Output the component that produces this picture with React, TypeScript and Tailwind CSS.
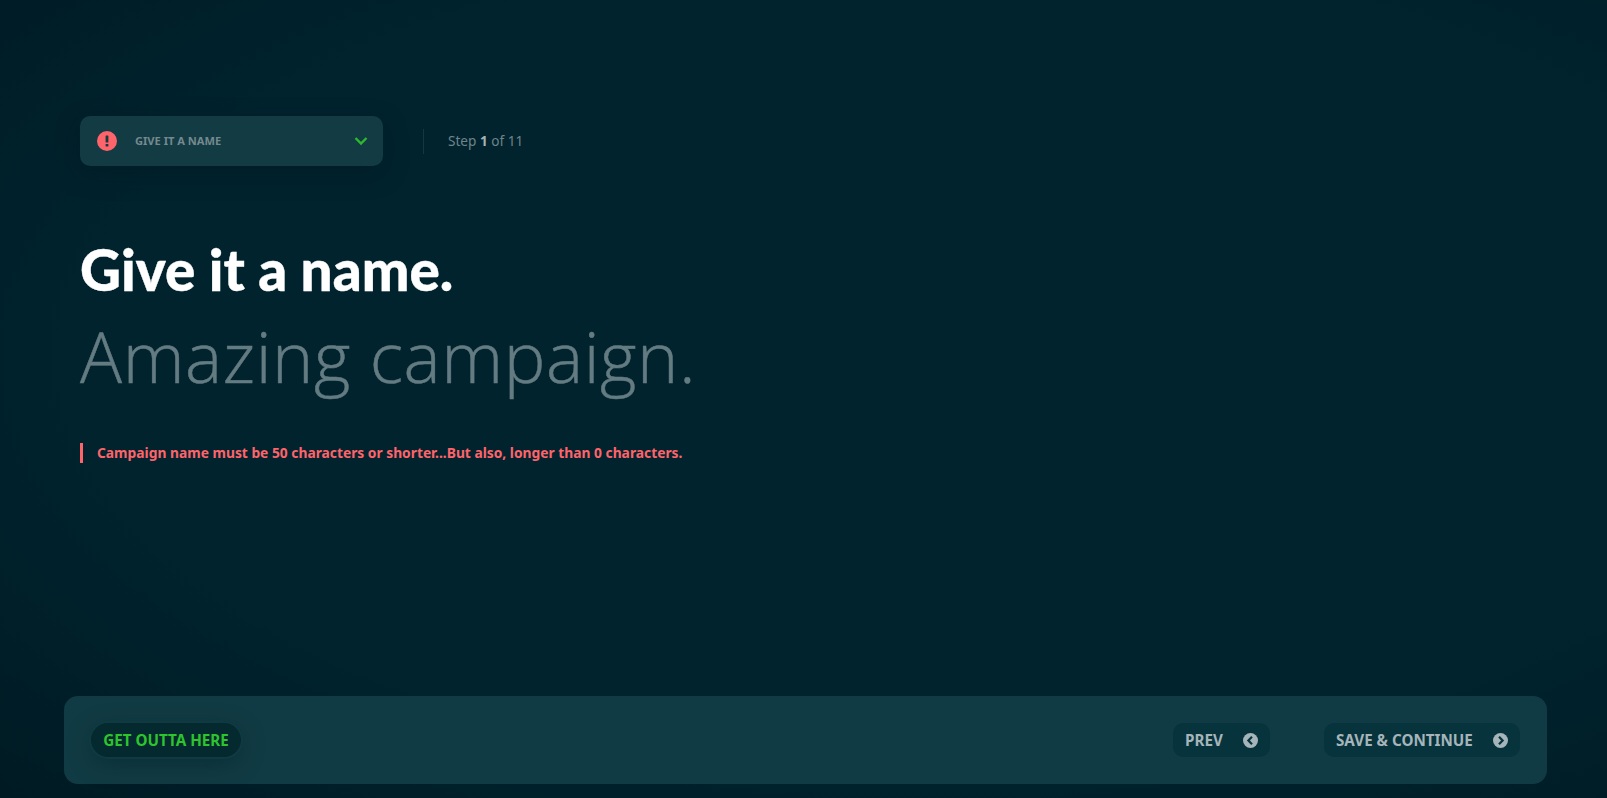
const App = () => {
  return (
    <div className="h-[798px] overflow-hidden flex flex-col justify-between bg-[#00222d] bg-[radial-gradient(ellipse_at_58%_45%,#00232e_65%,#001a23_100%)] font-['Noto_Sans',sans-serif]">
      <main className="pt-[116px] pl-20">
        <div className="flex items-center">
          <button
            type="button"
            className="w-[303px] h-[50px] pl-[17px] pr-[15px] flex items-center rounded-[10px] bg-[#123b43] shadow-[0_8px_24px_rgba(0,20,28,0.35)]"
          >
            <span className="w-5 h-5 rounded-full bg-[#ff646a] flex items-center justify-center">
              <svg width="4" height="12" viewBox="0 0 4 12" fill="#143a42">
                <rect x="0.6" y="0.5" width="2.8" height="7" rx="0.6" />
                <rect x="0.6" y="9" width="2.8" height="2.6" rx="0.6" />
              </svg>
            </span>
            <span className="ml-[18px] text-[11.1px] font-bold text-[#75898f] leading-none">GIVE IT A NAME</span>
            <svg className="ml-auto" width="14" height="10" viewBox="0 0 14 10" fill="none" stroke="#2db92d" strokeWidth="2.4">
              <path d="M1.5 2 L7 7.5 L12.5 2" />
            </svg>
          </button>
          <div className="ml-10 w-px h-[25px] bg-[#17373f]" />
          <p className="ml-6 text-[13.6px] text-[#6f848a] leading-none">
            Step <span className="font-bold text-[#a5b3b7]">1</span> of 11
          </p>
        </div>

        <h1 className="mt-[65px] text-[56.6px] leading-[76px] font-black text-white font-['Lato',sans-serif] [-webkit-text-stroke:0.4px_#ffffff]">
          Give it a name.
        </h1>
        <h2 className="mt-[1px] text-[70px] leading-[96px] font-light text-[#647b82] font-['Open_Sans',sans-serif] tracking-[0.6px] [-webkit-text-stroke:0.5px_#647b82]">
          Amazing campaign.
        </h2>

        <p className="mt-[39px] border-l-[3px] border-[#ff646a] pl-[14px] h-5 flex items-center text-[13.8px] font-bold text-[#ff646a] leading-none">
          Campaign name must be 50 characters or shorter...But also, longer than 0 characters.
        </p>
      </main>

      <footer className="mx-16 mb-[14px] w-[1483px] h-[88px] rounded-[14px] bg-[#113b44] pl-[27px] pr-[27px] flex items-center justify-between">
        <button
          type="button"
          className="h-[34px] w-[150px] rounded-full bg-[#04292f] ring-2 ring-[#0f3a42] shadow-[0_6px_24px_rgba(0,30,38,0.45)] text-[15.2px] font-bold text-[#2ec42e]"
        >
          GET OUTTA HERE
        </button>
        <div className="flex items-center gap-[54px]">
          <button
            type="button"
            className="h-[34px] w-[97px] pl-3 pr-[12px] rounded-[10px] bg-[#07333c] flex items-center justify-between text-[15.2px] font-bold text-[#a5b5ba]"
          >
            PREV
            <svg width="15" height="15" viewBox="0 0 15 15">
              <circle cx="7.5" cy="7.5" r="7.5" fill="#a5b5ba" />
              <path d="M9 3.8 L5.4 7.5 L9 11.2" fill="none" stroke="#07333c" strokeWidth="2.2" />
            </svg>
          </button>
          <button
            type="button"
            className="h-[34px] w-[196px] pl-3 pr-[12px] rounded-[10px] bg-[#07333c] flex items-center justify-between text-[15.2px] font-bold text-[#a5b5ba]"
          >
            SAVE &amp; CONTINUE
            <svg width="15" height="15" viewBox="0 0 15 15">
              <circle cx="7.5" cy="7.5" r="7.5" fill="#a5b5ba" />
              <path d="M6 3.8 L9.6 7.5 L6 11.2" fill="none" stroke="#07333c" strokeWidth="2.2" />
            </svg>
          </button>
        </div>
      </footer>
    </div>
  );
};

export default App;
